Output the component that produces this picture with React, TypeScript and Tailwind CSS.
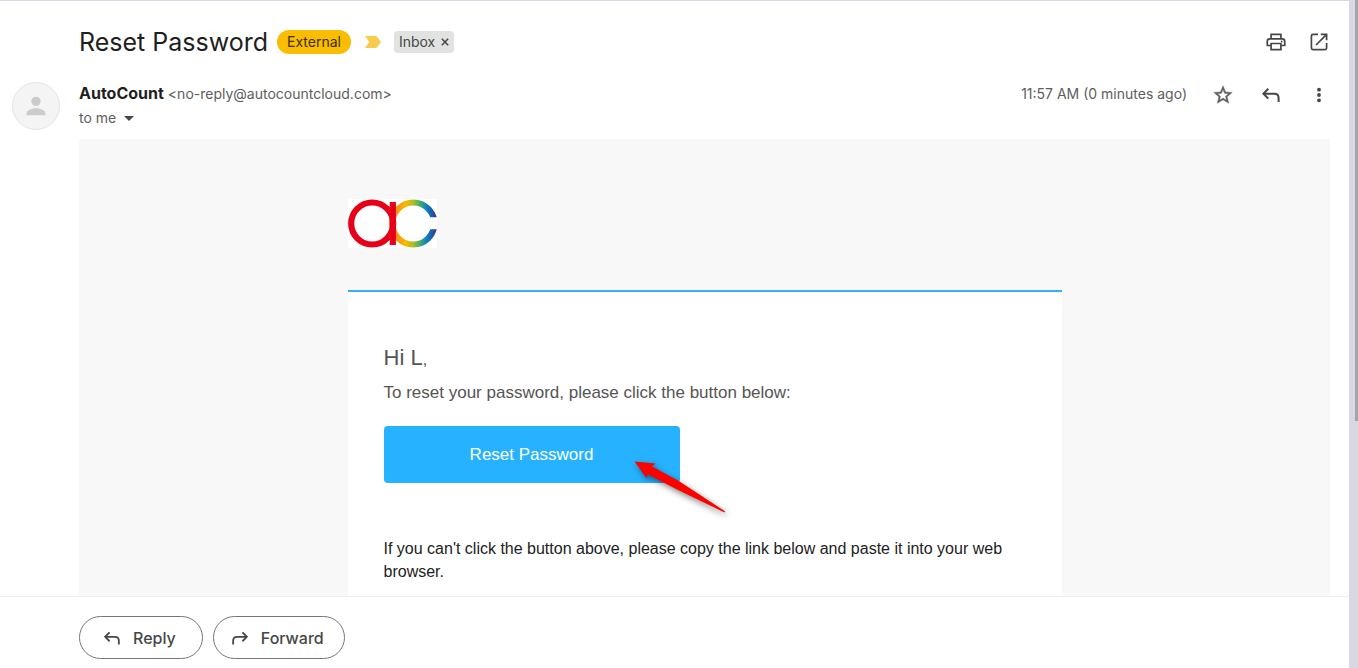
import type { ReactNode } from "react";

const iconButton = "flex size-6 shrink-0 items-center justify-center text-[#444746]";

function IconButton({ label, children }: { label: string; children: ReactNode }) {
  return (
    <button type="button" aria-label={label} className={iconButton}>
      {children}
    </button>
  );
}

function PrintIcon() {
  return (
    <svg viewBox="0 0 20 20" className="size-5" fill="none" stroke="currentColor" strokeWidth="1.7">
      <path d="M5.1 6.5V2.3h9.8v4.2" />
      <path d="M4.9 13.5H1.3V9.2c0-1.5 1-2.4 2.400-2.400h12.600c1.400 0 2.400.9 2.400 2.400v4.300h-3.600" />
      <path d="M5.100 11.500h9.800v6.200H5.100z" />
      <circle cx="15.700" cy="9.400" r="0.900" fill="currentColor" stroke="none" />
    </svg>
  );
}

function OpenIcon() {
  return (
    <svg viewBox="0 0 20 20" className="size-5" fill="none" stroke="currentColor" strokeWidth="1.7">
      <path d="M9 2.400H3.900c-.9 0-1.500.6-1.500 1.500v12.200c0 .9.6 1.500 1.500 1.500h12.200c.9 0 1.500-.6 1.500-1.500V11" />
      <path d="M11.800 2.400h5.800v5.800" />
      <path d="M17.400 2.600 7 13" />
    </svg>
  );
}

function ReplyIcon({ className = "size-5" }: { className?: string }) {
  return (
    <svg viewBox="0 0 20 20" className={className} fill="none" stroke="currentColor" strokeWidth="2">
      <path d="M7.300 3.800 2.400 8.700l4.900 4.900" />
      <path d="M2.600 8.700h10.800c2.600 0 4.200 1.600 4.200 4.200v4.200" />
    </svg>
  );
}

function StarIcon() {
  return (
    <svg
      viewBox="0 0 24 24"
      className="size-[22px] text-[#5e5e5e]"
      fill="currentColor"
      stroke="currentColor"
      strokeWidth="0.500"
    >
      <path d="m22 9.240-7.190-.620L12 2 9.190 8.630 2 9.240l5.460 4.730L5.820 21 12 17.270 18.180 21l-1.630-7.030L22 9.240zM12 15.400l-3.760 2.270 1-4.280-3.320-2.880 4.380-.380L12 6.100l1.710 4.040 4.380.380-3.320 2.880 1 4.280L12 15.400z" />
    </svg>
  );
}

function Logo() {
  return (
    <svg viewBox="0 0 89 49" className="h-[49px] w-[89px] bg-white" role="img" aria-label="AutoCount">
      <defs>
        <linearGradient id="spectrum" gradientUnits="userSpaceOnUse" x1="44" y1="0" x2="89" y2="0">
          <stop offset="0" stopColor="#f08020" />
          <stop offset="0.3" stopColor="#fbb900" />
          <stop offset="0.46" stopColor="#b4bd20" />
          <stop offset="0.62" stopColor="#45ad68" />
          <stop offset="0.78" stopColor="#087fc4" />
          <stop offset="1" stopColor="#40308d" />
        </linearGradient>
        <clipPath id="opening">
          <path d="M41 0h48v18.200H70v12.100h19V49H41z" />
        </clipPath>
      </defs>
      <circle
        cx="65.300"
        cy="24.500"
        r="21"
        fill="none"
        stroke="url(#spectrum)"
        strokeWidth="6.200"
        clipPath="url(#opening)"
      />
      <circle cx="24.200" cy="24.500" r="21" fill="none" stroke="#e60019" strokeWidth="6.200" />
      <path d="M41.700 3h6.200v43h-6.200z" fill="#e60019" />
    </svg>
  );
}

function PointerArrow() {
  return (
    <svg
      viewBox="0 0 120 80"
      aria-hidden="true"
      className="pointer-events-none absolute top-[26px] left-60 h-20 w-[120px] drop-shadow-[2px_3px_3px_rgba(0,0,0,0.5)]"
    >
      <path
        d="M10.500 9.500 31.500 11.500 28 14.600 54 28.500 101 59.200 100.500 60.600 53 37.500 23.800 22.300 22.500 26z"
        fill="#ff0000"
      />
    </svg>
  );
}

function MessageHeader() {
  return (
    <header>
      <div className="flex h-[81px] items-center pt-px pr-[18px] pl-[79px]">
        <h1 className="text-[25px] leading-8 text-[#1f1f1f]">Reset Password</h1>
        <span className="ml-[9px] rounded-full bg-[#fbbc04] px-[10px] text-sm leading-6 text-[#3c3000]">
          External
        </span>
        <svg viewBox="0 0 16 12" className="mr-[13px] ml-[14px] h-3 w-4" aria-label="Important" role="img">
          <path d="M0 0h10.500c.7 0 1.200.3 1.600.8L16 6l-3.900 5.200c-.4.5-.9.8-1.600.8H0l4.200-6z" fill="#f7cb4d" />
        </svg>
        <span className="flex items-center gap-[6px] rounded bg-[#e1e3e1] px-[5px] text-sm leading-[22px] text-[#444746]">
          Inbox
          <button type="button" aria-label="Remove label Inbox">
            <svg viewBox="0 0 8 8" className="size-2" stroke="currentColor" strokeWidth="1.500">
              <path d="m.8.8 6.400 6.400M7.200.8.8 7.200" />
            </svg>
          </button>
        </span>
        <div className="ml-auto flex gap-[19px]">
          <IconButton label="Print all">
            <PrintIcon />
          </IconButton>
          <IconButton label="In new window">
            <OpenIcon />
          </IconButton>
        </div>
      </div>

      <div className="flex items-start pr-[18px] pb-[9px] pl-3">
        <div className="mr-[19px] flex size-12 shrink-0 items-center justify-center rounded-full border border-[#e5e5e5] bg-[#f4f4f4]">
          <svg viewBox="0 0 24 24" className="size-7 text-[#cbcbcb]" fill="currentColor">
            <path d="M12 12a4 4 0 1 0 0-8 4 4 0 0 0 0 8zm0 2c-2.670 0-8 1.340-8 4v2h16v-2c0-2.660-5.330-4-8-4z" />
          </svg>
        </div>
        <div>
          <p className="flex items-baseline gap-1 text-sm leading-[22px] text-[#5e5e5e]">
            <span className="text-base leading-[22px] font-bold text-[#1f1f1f]">AutoCount</span>
            <span>&lt;no-reply@autocountcloud.com&gt;</span>
          </p>
          <button type="button" className="mt-px flex items-center gap-2 text-sm leading-6 text-[#5e5e5e]">
            to me
            <svg viewBox="0 0 10 5" className="h-[5px] w-[10px]" fill="#444746">
              <path d="M0 0h10L5 5z" />
            </svg>
          </button>
        </div>
        <div className="ml-auto flex items-start text-sm text-[#5e5e5e]">
          <time className="mr-6 leading-6">11:57 AM (0 minutes ago)</time>
          <div className="flex gap-6 pt-px">
            <IconButton label="Star">
              <StarIcon />
            </IconButton>
            <IconButton label="Reply">
              <ReplyIcon />
            </IconButton>
            <IconButton label="More">
              <svg viewBox="0 0 20 20" className="size-5" fill="currentColor">
                <circle cx="10" cy="4.700" r="1.900" />
                <circle cx="10" cy="10" r="1.900" />
                <circle cx="10" cy="15.300" r="1.900" />
              </svg>
            </IconButton>
          </div>
        </div>
      </div>
    </header>
  );
}

function MessageBody() {
  return (
    <article className="mr-[19px] ml-[79px] min-h-0 flex-1 overflow-hidden bg-[#f8f8f8] px-6 pt-[60px] font-['Liberation_Sans',Arial,sans-serif]">
      <div className="mx-auto max-w-[714px]">
        <Logo />
        <div className="mt-[42px] border-t-2 border-[#35b0f0] bg-white px-9 pt-[50px] pb-20">
          <p className="text-[22px] leading-8 text-[#555555]">
            Hi L<span className="text-base">,</span>
          </p>
          <p className="mt-[5px] text-[17px] leading-7 text-[#555555]">
            To reset your password, please click the button below:
          </p>
          <div className="relative mt-[19px] w-[296px]">
            <a
              href="#reset"
              className="block rounded bg-[#27b2ff] text-center text-[17px] leading-[57px] text-white"
            >
              Reset Password
            </a>
            <PointerArrow />
          </div>
          <p className="mt-[54px] text-base leading-[23px] text-[#222222]">
            If you can't click the button above, please copy the link below and paste it into your web browser.
          </p>
        </div>
      </div>
    </article>
  );
}

const actionButton =
  "flex h-[43px] items-center rounded-full border border-[#747775] text-base font-medium text-[#444746]";

export default function App() {
  return (
    <div className="flex h-screen bg-[#d9d8e0] font-[Inter,'Open_Sans',sans-serif]">
      <main className="flex min-w-0 flex-1 flex-col border-t border-[#d6d9e6] bg-white">
        <MessageHeader />
        <MessageBody />
        <footer className="flex gap-[10px] border-t border-[#eeeeee] pt-[19px] pb-[9px] pl-[79px]">
          <button type="button" className={`${actionButton} gap-3 pr-[26px] pl-[23px]`}>
            <ReplyIcon className="size-[18px]" />
            Reply
          </button>
          <button type="button" className={`${actionButton} gap-3 pr-5 pl-[17px]`}>
            <ReplyIcon className="size-[18px] -scale-x-100" />
            Forward
          </button>
        </footer>
      </main>
      <div className="w-[9px] shrink-0 pl-[6px]">
        <div className="h-[63%] bg-[#a5a4ab]" />
      </div>
    </div>
  );
}
